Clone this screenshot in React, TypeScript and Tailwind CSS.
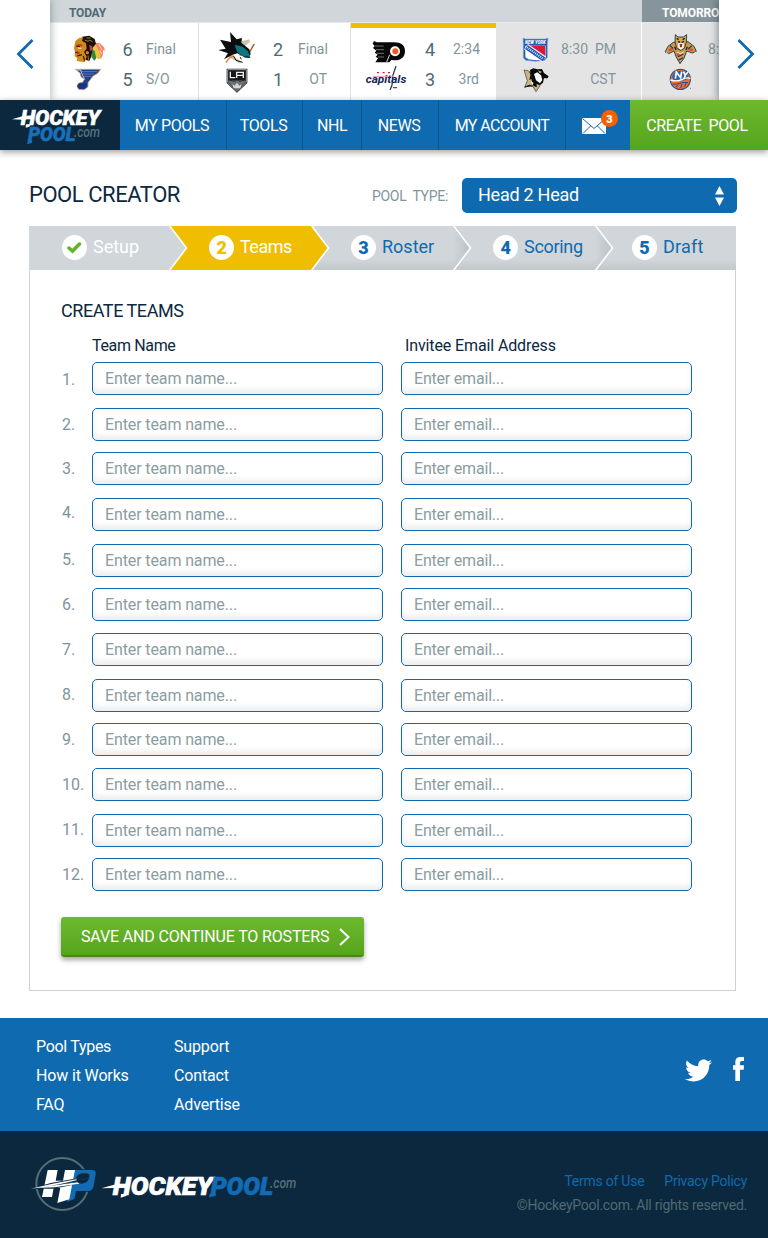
import type { ReactNode } from "react";
import { FaTwitter } from "react-icons/fa";

const logoFont = "font-['Roboto',sans-serif] font-black italic";

function TeamMark({ x, y, children }: { x: number; y: number; children: ReactNode }) {
  return (
    <svg className="h-[30px] w-[42px] shrink-0 overflow-visible" viewBox={`${x} ${y} 126 90`}>
      {children}
    </svg>
  );
}

const Blackhawks = () => (
  <TeamMark x={204} y={102}>
    <path d="M286 128l14 2 12 12 3 10-6-2 0 14-6 12-8-8-10-20z" fill="#f5856a" />
    <path d="M276 130l12 4 12 26 2 16-8 2-12-14z" fill="#e9c63c" />
    <path d="M272 142l12 12 5 20-6 8-8-10z" fill="#2f8a3a" />
    <path d="M296 132l10 18M300 152l6 12" stroke="#fff" strokeWidth="2" />
    <path d="M246 110l22-3 16 10 4 14-10 12-4 26-6 14-12-4-14-28z" fill="#15110c" />
    <path d="M226 124l10-9 14-5-4 12 12 8 2 16-8 10 8 14-6 17-24-4 2-8-8-6 1-12-3-12z" fill="#d08a1c" />
    <path d="M228 138l12 2M232 168l14-4M226 158l8-2M250 168l4 14" stroke="#2a1608" strokeWidth="3.500" />
    <path d="M254 120l10 4 6-4 8 6M260 114l12 0" stroke="#c58f2b" strokeWidth="2.500" fill="none" />
    <path d="M232 132l16 2-2 5-14-1zM230 156l10 1-2 6-8-1z" fill="#c5332b" />
    <path d="M234 144l10 1" stroke="#fff" strokeWidth="3" />
    <path d="M268 134l8 4 2 12-8 4z" fill="#c63a55" />
    <circle cx="262" cy="158" r="5" fill="#d08a1c" />
    <path d="M264 166l2 18" stroke="#d9532f" strokeWidth="3" />
  </TeamMark>
);

const Blues = () => (
  <TeamMark x={204} y={192}>
    <path d="M226 208h76l-9 12-14 8-15 20v12l-12 9-16-1-5-10 6-9 11-2 5-9-10-8-3-11z" fill="#1f3f94" stroke="#c9a25b" strokeWidth="2.500" />
    <path d="M242 215h50M249 222h32M252 229h22" stroke="#8f93a8" strokeWidth="2" fill="none" />
    <path d="M228 210l14 0 4 12 8 16" stroke="#dcdcdc" strokeWidth="2.500" fill="none" />
    <ellipse cx="246" cy="258" rx="14" ry="9" fill="#173584" />
  </TeamMark>
);

const Sharks = () => (
  <TeamMark x={48} y={102}>
    <path d="M108 128l40-10 2 8-26 22zM84 158l42 28-8 4-40-24z" fill="#c9c6ad" />
    <path d="M162 132l-16 28M78 188l8-12 14-9 30-2" stroke="#e57f24" strokeWidth="4" fill="none" />
    <path d="M164 131l-16 28" stroke="#2a1a10" strokeWidth="1.500" />
    <path d="M90 96l20 22 16-4-2 14 24 20 4 14-8 12-12-4-20-10-14 4-26 14 12-18-29-10 22-4-17-27 33 7z" fill="#0b0d10" />
    <path d="M104 134l24 6 16 14 8 20-20-2-20-16-5-12z" fill="#0a7782" />
    <path d="M100 167l8 14 20 6M118 168l6 10" stroke="#15110c" strokeWidth="3" fill="none" />
    <path d="M98 166l14-5 12 9-10 4z" fill="#fff" />
    <path d="M132 170l18 2" stroke="#15110c" strokeWidth="2.500" />
  </TeamMark>
);

const Kings = () => (
  <TeamMark x={48} y={192}>
    <path d="M80 206h62v43l-31 29-31-29z" fill="#17191b" />
    <path d="M83 209h56v38l-28 27-28-27z" fill="none" stroke="#9ea2a4" strokeWidth="3" />
    <path d="M91 215v18h15M110 234v-17h20v17M111 226h18" stroke="#eceeee" strokeWidth="4" fill="none" />
    <path d="M85 241h52v5l-26 26-26-26z" fill="#6c7072" />
    <path d="M97 252l7 5 7-9 7 9 7-5-4 13h-20z" fill="#d3d5d6" />
    <path d="M84 239l20 5 7-5 8 5 19-5" stroke="#22272a" strokeWidth="3" fill="none" />
  </TeamMark>
);

const Flyers = () => (
  <TeamMark x={495} y={102}>
    <path d="M522 123l8 4h52c22 0 33 9 33 26s-10 28-31 28l-10-1-6 7h-42l8-12-7-5 6-6-9-6 5-6-10-8 5-6-6-7z" fill="#08080a" />
    <path d="M525 138h26M528 149h24M530 160h22M534 171h18" stroke="#b9b9b9" strokeWidth="1.800" />
    <circle cx="585" cy="154" r="15" fill="#fff" />
    <circle cx="586" cy="154" r="9" fill="#f4591f" />
    <path d="M569 164l-9 22" stroke="#fff" strokeWidth="2.500" />
  </TeamMark>
);

const Capitals = () => (
  <TeamMark x={495} y={192}>
    <text x="497" y="249" className="font-['Roboto',sans-serif] font-bold italic" fontSize="31" fill="#152b57" textLength="122" lengthAdjust="spacingAndGlyphs">capitals</text>
    <path d="M588 198l-10 30-2 28-6 14" stroke="#152b57" strokeWidth="3.500" fill="none" />
    <path d="M519 229h46M572 229h10" stroke="#ee9aa7" strokeWidth="3" />
    <path d="M531 218h6M548 218h6M564 218h6M579 263h12" stroke="#d61a39" strokeWidth="4" />
  </TeamMark>
);

const Rangers = () => (
  <TeamMark x={195} y={102}>
    <path d="M219 114l7 3h60l8-3-2 17v41l-8 9-27 3-30-3-7-8v-42z" fill="#2459b5" stroke="#7fa9e4" strokeWidth="2" />
    <path d="M226 137h61v37l-6 5-22 2-24-3-9-6z" fill="#fff" />
    <path d="M240 138h46v36z" fill="#d31d38" />
    <path d="M228 140l54 38" stroke="#fff" strokeWidth="20" />
    <path d="M229 141l53 37" stroke="#2459b5" strokeWidth="14" />
    <path d="M231 142l48 34" stroke="#d9e7fb" strokeWidth="6" strokeDasharray="3 3" />
    <text x="225" y="133" className={logoFont} fontSize="14" fill="#fff" textLength="62" lengthAdjust="spacingAndGlyphs">NEW YORK</text>
  </TeamMark>
);

const Penguins = () => (
  <TeamMark x={195} y={192}>
    <path d="M222 210l12 2 26 16 16 20-18 27-12-20-22 7 8-20z" fill="#c8b584" stroke="#3d382a" strokeWidth="2" />
    <path d="M240 210l10-5 12 3 14-1 6 12 14 10-5 9-9-4-3 14-10 7-9-3 0 10-10-5-6-20-6 3 4-17z" fill="#090a0b" />
    <path d="M252 222l10-5 11 9 4 14-7 10-12-9zM243 244l8 5-4 5z" fill="#fff" />
    <path d="M264 211l12 5-7 4z" fill="#d9b65d" />
    <path d="M224 261l14-5 10 3M239 216l18 35" stroke="#181818" strokeWidth="3" />
    <path d="M285 235l10 2" stroke="#fff" strokeWidth="2" />
  </TeamMark>
);

const Panthers = () => (
  <TeamMark x={630} y={102}>
    <path d="M670 127l-16 12-9 17 11 5 16-8 7 19 11 19 12-16 8-22 17 6 12-5-7-15-18-14z" fill="#c69b4b" stroke="#162746" strokeWidth="2.500" />
    <path d="M676 104l8 7h16l10-7-1 23-6 18-11 6-12-6-5-19z" fill="#d5a952" stroke="#162746" strokeWidth="2.500" />
    <path d="M684 124l6 3M702 124l-7 3M680 115l6 4M704 115l-6 4M674 140l4 10M712 140l-4 10" stroke="#16213a" strokeWidth="4" />
    <path d="M684 130h17l0 13-8 6-8-6z" fill="#fff" />
    <path d="M689 132h8l-1 10h-6z" fill="#b51f31" />
    <path d="M656 151l14-5M714 146l14 5M687 160l-6 8" stroke="#e04a35" strokeWidth="7" />
    <path d="M684 170l16-8M686 180l13-7M660 137l9 8M725 138l-10 8" stroke="#203258" strokeWidth="3.500" />
    <path d="M647 156l6 5M738 156l-6 5M682 157l9 4 10-5" stroke="#fff" strokeWidth="2.500" fill="none" />
  </TeamMark>
);

const Islanders = () => (
  <TeamMark x={630} y={192}>
    <circle cx="691" cy="238" r="32" fill="#23529b" />
    <circle cx="691" cy="238" r="29" fill="#f06a2c" />
    <path d="M666 230a27 27 0 0 1 50-2l-8 12-36 3z" fill="#2865ab" />
    <path d="M676 236l3-20 13 17 3-18M700 215l6 10 8-9M706 225l-4 12" stroke="#fff" strokeWidth="5" fill="none" />
    <path d="M661 240q20 6 36-2t24-2" stroke="#fff" strokeWidth="4" fill="none" />
    <path d="M668 252q12 2 20-2t26-2M678 262l6-8M692 264l4-12M704 260l4-10" stroke="#1e4d94" strokeWidth="3" fill="none" />
    <path d="M720 265h3" stroke="#23529b" strokeWidth="2" />
  </TeamMark>
);

function Game({
  className,
  rows,
  scoreClass,
  statusClass,
}: {
  className: string;
  rows: { mark: ReactNode; score?: string; status: string }[];
  scoreClass: string;
  statusClass: string;
}) {
  return (
    <div className={`h-[77px] shrink-0 ${className}`}>
      {rows.map((r, i) => (
        <div key={i} className="flex h-[30px] items-center">
          {r.mark}
          <span className={`shrink-0 text-center text-[18px] text-[#506972] ${scoreClass}`}>{r.score}</span>
          <span className={`shrink-0 text-sm whitespace-pre text-[#82959b] ${statusClass}`}>{r.status}</span>
        </div>
      ))}
    </div>
  );
}

function Chevron({ left }: { left?: boolean }) {
  return (
    <svg className="h-[30px] w-[18px]" viewBox="0 0 18 30" fill="none" stroke="#0f6aaf" strokeWidth="2.800">
      <path d={left ? "M16.500 1L2.500 15L16.500 29" : "M1.500 1L15.500 15L1.500 29"} />
    </svg>
  );
}

function Scoreboard() {
  return (
    <div className="flex h-[100px] bg-white">
      <div className="z-10 flex w-[50px] shrink-0 items-center justify-center bg-white pt-2 shadow-[1px_0_8px_rgba(60,75,85,0.4)]">
        <Chevron left />
      </div>
      <div className="w-[669px] overflow-hidden bg-white">
        <div className="flex h-[23px] border-b border-[#e6eaeb] bg-[#d0d6d9] text-xs leading-[27px] font-bold">
          <div className="w-[592px] shrink-0 pl-[19px] tracking-[-0.2px] text-[#506972]">TODAY</div>
          <div className="w-[80px] shrink-0 bg-[#85959b] pl-[20px] tracking-[-0.1px] text-white">TOMORROW</div>
        </div>
        <div className="flex">
          <Game
            className="w-[149px] border-r border-[#dce2e4] pt-[11px] pl-[18px]"
            scoreClass="w-[35px]"
            statusClass="pl-px"
            rows={[
              { mark: <Blackhawks />, score: "6", status: "Final" },
              { mark: <Blues />, score: "5", status: "S/O" },
            ]}
          />
          <Game
            className="w-[152px] border-r border-[#dce2e4] pt-[11px] pl-[17px]"
            scoreClass="w-[40px]"
            statusClass="w-[29px] text-right"
            rows={[
              { mark: <Sharks />, score: "2", status: "Final" },
              { mark: <Kings />, score: "1", status: "OT" },
            ]}
          />
          <Game
            className="w-[145px] border-t-[5px] border-[#efbe00] pt-[6px] pl-[14px]"
            scoreClass="w-[46px]"
            statusClass="w-[26px] text-right"
            rows={[
              { mark: <Flyers />, score: "4", status: "2:34" },
              { mark: <Capitals />, score: "3", status: "3rd" },
            ]}
          />
          <Game
            className="w-[146px] border-r border-white bg-[#e4e4e4] pt-[11px] pl-[19px]"
            scoreClass="w-0"
            statusClass="w-[59px] text-right"
            rows={[
              { mark: <Rangers />, status: "8:30  PM" },
              { mark: <Penguins />, status: "CST" },
            ]}
          />
          <Game
            className="w-[146px] bg-[#e4e4e4] pt-[11px] pl-[18px]"
            scoreClass="w-0"
            statusClass="pl-[6px]"
            rows={[
              { mark: <Panthers />, status: "8:30  PM" },
              { mark: <Islanders />, status: "" },
            ]}
          />
        </div>
      </div>
      <div className="z-10 flex w-[49px] shrink-0 items-center justify-center bg-white pt-2 pl-1 shadow-[-1px_0_8px_rgba(30,45,55,0.5)]">
        <Chevron />
      </div>
    </div>
  );
}

function HeaderLogo() {
  return (
    <svg className="h-[50px] w-[120px] shrink-0 bg-[#0c283e]" viewBox="0 300 360 150">
      <text x="62" y="374" className={logoFont} fontSize="61" fill="#fff" stroke="#fff" strokeWidth="1.500" textLength="238" lengthAdjust="spacingAndGlyphs">HOCKEY</text>
      <path d="M36 358l34-10 30-2v9l-34 4z" fill="#fff" />
      <path d="M78 373l14 0-4 7-11 3z" fill="#fff" />
      <text x="84" y="424" className={logoFont} fontSize="59" fill="#1a70b8" stroke="#1a70b8" strokeWidth="1.500" textLength="142" lengthAdjust="spacingAndGlyphs">POOL</text>
      <path d="M84 421l13 0-2 8-14 4z" fill="#1a70b8" />
      <text x="222" y="411" className="font-['Roboto',sans-serif] font-medium italic" fontSize="46" fill="#566f78" textLength="78" lengthAdjust="spacingAndGlyphs">.com</text>
    </svg>
  );
}

function FooterLogo() {
  return (
    <svg className="h-[58px] w-[270px]" viewBox="90 435 810 174">
      <circle cx="187" cy="522" r="78" fill="none" stroke="#566f74" strokeWidth="6" />
      <path d="M212 478h68q13 0 12 13l-7 36q-3 18-19 18h-34l-5 24-27 9 8-40z" fill="#0c283e" />
      <path d="M210 480h66q13 0 11 12l-6 35q-3 16-17 16h-36l-5 24-22 8z" fill="#126cb5" />
      <path d="M143 480h30l-6 32h22l6-32h30l-17 88-36 11 9-46h-20l-5 28h-30z" fill="#fff" />
      <path d="M92 536l60-17 84-15-4 18-72 14z" fill="#0c283e" />
      <path d="M92 536l62-14 82-16-4 4-74 18z" fill="#fff" />
      <path d="M110 534l122-18 6 5-74 11z" fill="#fff" />
      <path d="M140 529l94-15v3z" fill="#1a5c94" />
      <ellipse cx="249" cy="499" rx="20" ry="9" fill="#0c283e" transform="rotate(-8 249 499)" />
      <path d="M229 505q1 16 16 16 20-1 23-20-16 13-39 4z" fill="#0c283e" />
      <text x="338" y="555" className={logoFont} fontSize="79" fill="#fff" stroke="#fff" strokeWidth="2" textLength="300" lengthAdjust="spacingAndGlyphs">HOCKEY</text>
      <path d="M304 535l44-12h30v10z" fill="#fff" />
      <path d="M363 552h18l-3 6-16 5z" fill="#fff" />
      <text x="632" y="555" className={logoFont} fontSize="79" fill="#126cb5" stroke="#126cb5" strokeWidth="2" textLength="188" lengthAdjust="spacingAndGlyphs">POOL</text>
      <path d="M629 552h20l-3 6-19 4z" fill="#126cb5" />
      <text x="810" y="533" className="font-['Roboto',sans-serif] font-medium italic" fontSize="46" fill="#566f78" textLength="79" lengthAdjust="spacingAndGlyphs">.com</text>
    </svg>
  );
}

function Nav() {
  const item = "flex shrink-0 items-center justify-center border-r border-[#0b5891] pt-[2px]";
  return (
    <nav className="z-20 flex h-[50px] bg-[#0f6aaf] text-base tracking-[-0.4px] text-white shadow-[0_2px_7px_rgba(0,0,0,0.4)]">
      <HeaderLogo />
      <a className={`${item} w-[107px] pr-[2px]`}>MY POOLS</a>
      <a className={`${item} w-[76px] pr-[2px]`}>TOOLS</a>
      <a className={`${item} w-[59px]`}>NHL</a>
      <a className={`${item} w-[77px] pr-[2px]`}>NEWS</a>
      <a className={`${item} w-[127px] tracking-[-0.6px]`}>MY ACCOUNT</a>
      <a className="relative flex w-[64px] shrink-0 items-center pt-[2px] pl-4">
        <svg className="h-[16px] w-[24px]" viewBox="0 0 24 16">
          <path d="M0 0h24v16H0z" fill="#fff" />
          <path d="M0.500 0.500L12 10.500L23.500 0.500M1 15.500L8.500 8M23 15.500L15.500 8" stroke="#0f6aaf" strokeWidth="1" fill="none" />
        </svg>
        <span className="absolute top-[10px] left-[35px] flex size-[17px] items-center justify-center rounded-full bg-[#f36100] pt-px text-[11px] leading-none font-black tracking-normal">3</span>
      </a>
      <a className="flex w-[138px] shrink-0 items-center justify-center bg-linear-to-b from-[#6eb92e] to-[#55a51c] pt-[2px] pr-[4px] whitespace-pre">CREATE  POOL</a>
    </nav>
  );
}

const shade = "bg-linear-to-b from-[#d0d6d9] from-75% to-[#c2c8ca]";

function StepEdge({ kind }: { kind: "done" | "active" | "todo" }) {
  return (
    <svg className={`h-[44px] w-[19px] shrink-0 ${kind === "done" ? "bg-[#efbe00]" : shade}`} viewBox="0 0 19 44">
      {kind === "done" && <path d="M0 0L17 22L0 44z" fill="#d0d6d9" />}
      {kind === "active" && <path d="M0 0L17 22L0 44z" fill="#efbe00" />}
      {kind === "todo" && (
        <>
          <defs>
            <linearGradient id="edge" x1="0" x2="1">
              <stop offset="0" stopColor="#9aa3a6" stopOpacity="0" />
              <stop offset="1" stopColor="#9aa3a6" stopOpacity="0.4" />
            </linearGradient>
          </defs>
          <path d="M0 0L17 22L0 44z" fill="url(#edge)" />
        </>
      )}
      <path d="M0 -1L17.500 22L0 45" fill="none" stroke="#fff" strokeWidth="1.600" />
    </svg>
  );
}

function StepLabel({ mark, label, className }: { mark: ReactNode; label: string; className: string }) {
  return (
    <div className={`flex h-[44px] shrink-0 items-center text-lg ${className}`}>
      <span className="mr-[6px] mb-px flex size-[25px] shrink-0 items-center justify-center rounded-full bg-white font-black">
        {mark}
      </span>
      <span className="pb-[2px]">{label}</span>
    </div>
  );
}

function Steps() {
  const todo = `${shade} text-[#0f6aaf]`;
  return (
    <div className="flex w-[707px]">
      <StepLabel
        className="w-[140px] bg-[#d0d6d9] pl-[33px] text-white"
        label="Setup"
        mark={
          <svg className="size-[15px]" viewBox="0 0 15 15" fill="none" stroke="#62b32a" strokeWidth="3.500" strokeLinecap="round">
            <path d="M2 8L5.500 11L12.500 4" />
          </svg>
        }
      />
      <StepEdge kind="done" />
      <StepLabel className="w-[123px] bg-[#efbe00] pl-[21px] tracking-[-0.5px] text-white" label="Teams" mark={<span className="text-[#efbe00]">2</span>} />
      <StepEdge kind="active" />
      <StepLabel className={`w-[123px] pl-[21px] ${todo}`} label="Roster" mark="3" />
      <StepEdge kind="todo" />
      <StepLabel className={`w-[123px] pl-[21px] tracking-[-0.3px] ${todo}`} label="Scoring" mark="4" />
      <StepEdge kind="todo" />
      <StepLabel className={`w-[122px] pl-[18px] tracking-[0.2px] ${todo}`} label="Draft" mark="5" />
    </div>
  );
}

const teamRows = [
  { gap: "mt-0", num: "pt-[3px]" },
  { gap: "mt-[13px]", num: "pt-0" },
  { gap: "mt-[11px]", num: "pt-0" },
  { gap: "mt-[13px]", num: "pb-[4px]" },
  { gap: "mt-[13px]", num: "pb-[2px]" },
  { gap: "mt-[11px]", num: "pt-0" },
  { gap: "mt-[12px]", num: "pt-0" },
  { gap: "mt-[13px]", num: "pb-[2px]" },
  { gap: "mt-[11px]", num: "pt-0" },
  { gap: "mt-[12px]", num: "pt-0" },
  { gap: "mt-[13px]", num: "pb-[2px]" },
  { gap: "mt-[11px]", num: "pt-0" },
];

const field =
  "h-[33px] w-[291px] shrink-0 rounded-[5px] border border-[#0f6aaf] bg-white px-3 text-base text-[#0c283e] shadow-[inset_0_-4px_6px_rgba(0,0,0,0.08)] outline-none placeholder:text-[#8b9da2] placeholder:opacity-100";

function TeamForm() {
  return (
    <section className="h-[721px] border-x border-b border-[#ccd3d5] pt-[30px] pl-[31px]">
      <h2 className="text-lg leading-[21px] tracking-[-0.45px] text-[#0c283e]">CREATE TEAMS</h2>
      <div className="mt-[14px] flex pl-[31px] text-base leading-[21px] text-[#0c283e]">
        <span className="w-[313px] tracking-[-0.35px]">Team Name</span>
        <span className="tracking-[-0.12px]">Invitee Email Address</span>
      </div>
      <div className="mt-[6px]">
        {teamRows.map((r, i) => (
          <div key={i} className={`flex h-[33px] ${r.gap}`}>
            <span className={`flex w-[31px] shrink-0 items-center pl-px text-base text-[#82959b] ${r.num}`}>{i + 1}.</span>
            <input className={`${field} tracking-[-0.12px]`} placeholder="Enter team name..." />
            <input className={`${field} ml-[18px] tracking-[-0.2px]`} placeholder="Enter email..." />
          </div>
        ))}
      </div>
      <button className="mt-[26px] flex h-[40px] w-[303px] items-center rounded-[3px] border-b-2 border-[#42891a] bg-linear-to-b from-[#6eb92e] to-[#55a51c] pt-[2px] pl-5 text-base tracking-[-0.15px] whitespace-nowrap text-white shadow-[0_3px_5px_rgba(0,0,0,0.35)]">
        SAVE AND CONTINUE TO ROSTERS
        <svg className="ml-[10px] h-[18px] w-[11px]" viewBox="0 0 11 18" fill="none" stroke="#fff" strokeWidth="2">
          <path d="M1 1L9.500 9L1 17" />
        </svg>
      </button>
    </section>
  );
}

function Footer() {
  return (
    <footer className="mt-[27px]">
      <div className="flex h-[113px] bg-[#0f6aaf] pl-9 text-base leading-[29px] tracking-[-0.15px] text-white">
        <ul className="w-[138px] pt-[14px]">
          <li className="tracking-[-0.3px]">Pool Types</li>
          <li>How it Works</li>
          <li>FAQ</li>
        </ul>
        <ul className="pt-[14px]">
          <li>Support</li>
          <li>Contact</li>
          <li>Advertise</li>
        </ul>
        <div className="mt-[38px] mr-[24px] ml-auto flex h-[26px] items-center">
          <FaTwitter className="mt-[2px] mr-[21px] size-[27px]" />
          <svg className="h-[24px] w-[11px]" viewBox="0 0 33 72" fill="#fff">
            <path d="M7 72V38H0V25h7V15Q7 0 22 0h11v12h-7q-5 0-5 5v8h12l-1 13H21v34z" />
          </svg>
        </div>
      </div>
      <div className="flex h-[107px] justify-between bg-[#0c283e] pr-[21px] pl-[30px]">
        <div className="pt-[24px]">
          <FooterLogo />
        </div>
        <div className="pt-[38px] text-right text-sm leading-6 tracking-[-0.25px] text-[#506972]">
          <div className="flex justify-end gap-5 text-[#0f6aaf]">
            <a>Terms of Use</a>
            <a>Privacy Policy</a>
          </div>
          <div>©HockeyPool.com. All rights reserved.</div>
        </div>
      </div>
    </footer>
  );
}

export default function App() {
  return (
    <div className="flex h-[1238px] w-[768px] flex-col overflow-hidden bg-white font-['Roboto',sans-serif]">
      <Scoreboard />
      <Nav />
      <main className="pt-[28px] pr-[32px] pl-[29px]">
        <div className="-mr-px flex h-[35px] items-center">
          <h1 className="mr-auto pb-[2px] text-[22px] tracking-[-0.45px] text-[#0c283e]">POOL CREATOR</h1>
          <span className="mr-[14px] text-sm tracking-[-0.3px] whitespace-pre text-[#82959b]">POOL  TYPE:</span>
          <div className="flex h-[35px] w-[275px] items-center justify-between rounded-[5px] bg-[#0f6aaf] pr-[13px] pb-px pl-[16px] text-lg tracking-[-0.25px] text-white">
            Head 2 Head
            <svg className="mt-px h-[20px] w-[9px]" viewBox="0 0 9 20" fill="#fff">
              <path d="M4.500 0L9 8.500H0zM4.500 20L9 11.500H0z" />
            </svg>
          </div>
        </div>
        <div className="mt-[13px] w-[707px]">
          <Steps />
          <TeamForm />
        </div>
      </main>
      <Footer />
    </div>
  );
}
